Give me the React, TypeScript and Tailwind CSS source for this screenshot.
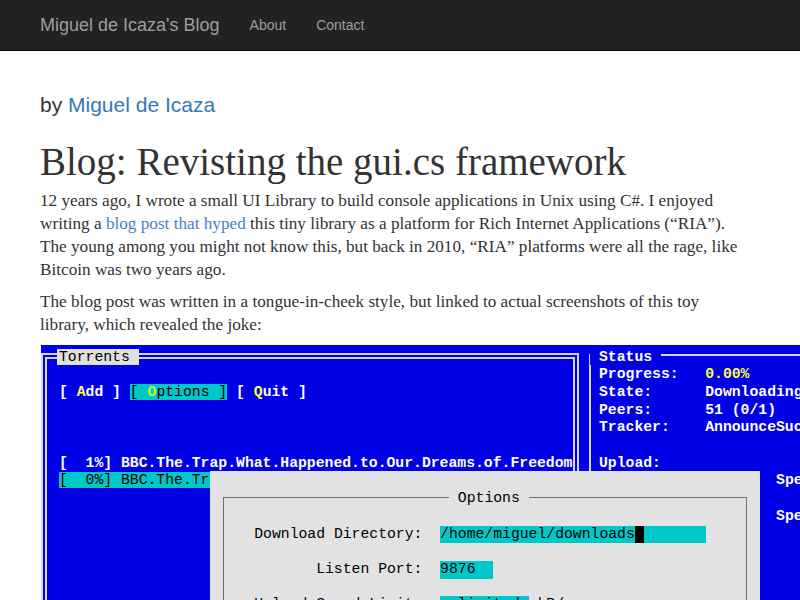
import React from 'react'

const mono = "font-['Liberation_Mono','DejaVu_Sans_Mono',monospace] text-[14.75px] leading-[17.7px] font-bold"

function Navbar() {
  return (
    <nav className="h-[51px] border-b border-[#080808] bg-[#222222]">
      <div className="flex h-[50px] items-center pl-[40px] font-['Liberation_Sans',Arial,sans-serif]">
        <span className="text-[18px] text-[#9d9d9d]">Miguel de Icaza's Blog</span>
        <a className="ml-[30px] text-[14px] text-[#9d9d9d]">About</a>
        <a className="ml-[30px] text-[14px] text-[#9d9d9d]">Contact</a>
      </div>
    </nav>
  )
}

function Row({ children }: { children?: React.ReactNode }) {
  return <div className="h-[17.7px] whitespace-pre">{children}</div>
}

// the gui.cs console screenshot
function Screenshot() {
  return (
    <div className={`relative ml-[1px] h-[260px] w-[780px] overflow-hidden bg-[#0000e4] text-white ${mono}`}>
      {/* Torrents frame */}
      <div className="absolute left-0 top-[8px] h-[300px] w-[538px] border-[6px] border-b-0 border-double border-[#d4d4f4]" />
      {/* Status frame */}
      <div className="absolute left-[548px] top-[9px] h-[300px] w-[300px] border-l-2 border-t-2 border-[#d4d4f4]" />

      <div className="absolute left-[18px] top-[3.5px]">
        <Row>
          <span className="-ml-[2px] bg-[#e0e0e0] pl-[2px] pr-[9px] font-normal text-black">Torrents</span>
        </Row>
        <Row />
        <Row>
          {'[ '}
          <span className="text-[#ffff48]">A</span>
          {'dd ] '}
          <span className="bg-[#00c8c8] font-normal text-black">
            {'[ '}
            <span className="font-bold text-[#c8f830]">O</span>
            {'ptions ]'}
          </span>
          {' [ '}
          <span className="text-[#ffff48]">Q</span>
          {'uit ]'}
        </Row>
        <Row />
        <Row />
        <Row />
        <Row>[  1%] BBC.The.Trap.What.Happened.to.Our.Dreams.of.Freedom</Row>
        <Row>
          <span className="bg-[#00c8c8] pr-[200px] font-normal text-black">[  0%] BBC.The.Trap.What.Happened.to.Our.Dreams</span>
        </Row>
      </div>

      <div className="absolute left-[558px] top-[3.5px]">
        <Row>
          <span className="-ml-[8.85px] bg-[#0000e4] px-[8.85px]">Status</span>
        </Row>
        <Row>
          <span className="inline-block w-[106.2px]">Progress:</span>
          <span className="text-[#ffff48]">0.00%</span>
        </Row>
        <Row>
          <span className="inline-block w-[106.2px]">State:</span>Downloading
        </Row>
        <Row>
          <span className="inline-block w-[106.2px]">Peers:</span>51 (0/1)
        </Row>
        <Row>
          <span className="inline-block w-[106.2px]">Tracker:</span>AnnounceSuccess
        </Row>
        <Row />
        <Row>Upload:</Row>
        <Row>{'                    Speed:'}</Row>
        <Row />
        <Row>{'                    Speed:'}</Row>
      </div>

      {/* Options dialog */}
      <div className="absolute left-[169px] top-[126px] h-[200px] w-[550px] bg-[#e2e2e2] font-normal text-black">
        <div className="absolute left-[13px] top-[26px] h-[300px] w-[524px] border border-b-0 border-[#6e6e6e]" />
        <div className="absolute left-[239px] top-[19px] bg-[#e2e2e2] px-[8.85px] whitespace-pre">Options</div>
        <div className="absolute left-[44.25px] top-[54.6px]">
          <div className="flex h-[17.7px] whitespace-pre">
            <span className="w-[168.15px] text-right">Download Directory:</span>
            <span className="ml-[17.7px] flex w-[265.5px] bg-[#00c8c8]">
              /home/miguel/downloads<span className="inline-block h-[17.7px] w-[8.85px] bg-black" />
            </span>
          </div>
          <div className="h-[17.7px]" />
          <div className="flex h-[17.7px] whitespace-pre">
            <span className="w-[168.15px] text-right">Listen Port:</span>
            <span className="ml-[17.7px] w-[53.1px] bg-[#00c8c8]">9876</span>
          </div>
          <div className="h-[17.7px]" />
          <div className="flex h-[17.7px] whitespace-pre">
            <span className="w-[168.15px] text-right">Upload Speed Limit:</span>
            <span className="ml-[17.7px] w-[88.5px] bg-[#00c8c8]">unlimited</span>
            <span> kB/s</span>
          </div>
        </div>
      </div>
    </div>
  )
}

export default function App() {
  return (
    <div className="min-h-screen w-full overflow-hidden bg-white">
      <Navbar />
      <main className="pl-[40px]">
        <p className="mt-[43px] font-['Liberation_Sans',Arial,sans-serif] text-[21px] leading-[22px] text-[#333333]">
          by <a className="text-[#337ab7]">Miguel de Icaza</a>
        </p>
        <h1 className="mt-[26px] font-['Liberation_Serif','Times_New_Roman',serif] text-[39px] leading-[40px] text-[#333333]">
          Blog: Revisting the gui.cs framework
        </h1>
        <div className="font-['Liberation_Serif','Times_New_Roman',serif] text-[17.2px] leading-[23px] text-[#333333]">
          <p className="mt-[7px] whitespace-nowrap">
            12 years ago, I wrote a small UI Library to build console applications in Unix using C#. I enjoyed
            <br />
            writing a <a className="text-[#4a7fbf]">blog post that hyped</a> this tiny library as a platform for Rich
            Internet Applications (“RIA”).
            <br />
            The young among you might not know this, but back in 2010, “RIA” platforms were all the rage, like
            <br />
            Bitcoin was two years ago.
          </p>
          <p className="mt-[9px] whitespace-nowrap">
            The blog post was written in a tongue-in-cheek style, but linked to actual screenshots of this toy
            <br />
            library, which revealed the joke:
          </p>
        </div>
        <div className="mt-[9px]">
          <Screenshot />
        </div>
      </main>
    </div>
  )
}
